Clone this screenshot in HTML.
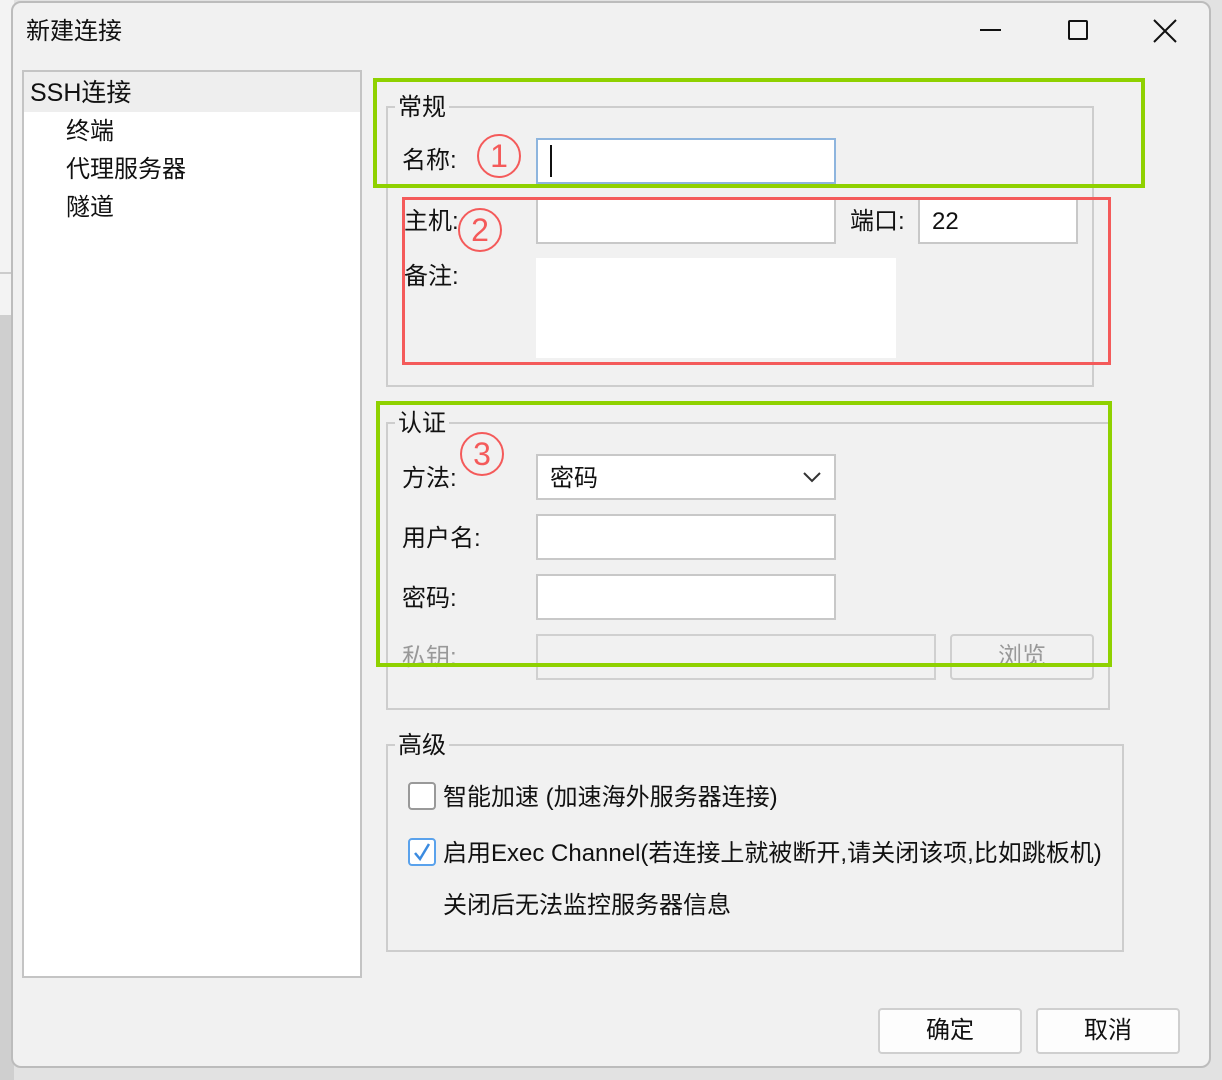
<!DOCTYPE html>
<html><head><meta charset="utf-8"><style>
*{margin:0;padding:0;box-sizing:border-box}
body{width:1222px;height:1080px;background:#e2e2e2;position:relative;overflow:hidden;font-family:"Liberation Sans","Noto Sans CJK SC",sans-serif;color:#111}
.a{position:absolute}
.t{position:absolute;font-size:24px;line-height:28px;white-space:nowrap}
.box{position:absolute;background:#fff;border:2px solid #c8c8c8}
.grp{position:absolute;border:2px solid #cdcdcd}
.lg{position:absolute;background:#f1f1f1;padding:0 3px;font-size:24px;line-height:28px}
.btn{position:absolute;background:#fdfdfd;border:2px solid #cfcfcf;border-radius:4px;font-size:24px;text-align:center;line-height:42px}
.circ{position:absolute;width:44px;height:44px;border:2px solid #f45a5a;border-radius:50%;color:#f45a5a;font-size:32px;line-height:40px;text-align:center}
</style></head><body>
<div class="a" style="left:0;top:0;width:14px;height:315px;background:#f3f3f3"></div>
<div class="a" style="left:0;top:272px;width:14px;height:2px;background:#ccc"></div>
<div class="a" style="left:0;top:315px;width:14px;height:765px;background:#cfcfcf"></div>
<div class="a" style="left:11px;top:1px;width:1200px;height:1067px;background:#f1f1f1;border:2px solid #bcbcbc;border-radius:10px"></div>
<div class="t" style="left:26px;top:18px">新建连接</div>
<div class="a" style="left:980px;top:29px;width:21px;height:2px;background:#111"></div>
<div class="a" style="left:1068px;top:20px;width:20px;height:20px;border:2px solid #111;border-radius:2px"></div>
<svg class="a" style="left:1152px;top:18px" width="26" height="26"><path d="M2 2L24 24M24 2L2 24" stroke="#111" stroke-width="2"/></svg>
<div class="a" style="left:22px;top:70px;width:340px;height:908px;background:#fff;border:2px solid #c4c4c4"></div>
<div class="a" style="left:24px;top:72px;width:336px;height:40px;background:#eeeeee"></div>
<div class="t" style="left:30px;top:79px;font-size:25px">SSH连接</div>
<div class="t" style="left:66px;top:118px">终端</div>
<div class="t" style="left:66px;top:156px">代理服务器</div>
<div class="t" style="left:66px;top:194px">隧道</div>
<div class="grp" style="left:386px;top:106px;width:708px;height:281px"></div>
<div class="lg" style="left:395px;top:94px">常规</div>
<div class="t" style="left:402px;top:147px">名称:</div>
<div class="box" style="left:536px;top:138px;width:300px;height:46px;border-color:#8eb5de"></div>
<div class="a" style="left:550px;top:145px;width:2px;height:32px;background:#111"></div>
<div class="t" style="left:404px;top:208px">主机:</div>
<div class="box" style="left:536px;top:198px;width:300px;height:46px"></div>
<div class="t" style="left:850px;top:208px">端口:</div>
<div class="box" style="left:918px;top:198px;width:160px;height:46px"></div>
<div class="t" style="left:932px;top:208px">22</div>
<div class="t" style="left:404px;top:263px">备注:</div>
<div class="a" style="left:536px;top:258px;width:360px;height:100px;background:#fff"></div>
<div class="grp" style="left:386px;top:422px;width:724px;height:288px"></div>
<div class="lg" style="left:395px;top:410px">认证</div>
<div class="t" style="left:402px;top:465px">方法:</div>
<div class="box" style="left:536px;top:454px;width:300px;height:46px"></div>
<div class="t" style="left:550px;top:465px">密码</div>
<svg class="a" style="left:802px;top:470px" width="20" height="14"><path d="M2 3L10 11L18 3" stroke="#333" stroke-width="2" fill="none"/></svg>
<div class="t" style="left:402px;top:525px">用户名:</div>
<div class="box" style="left:536px;top:514px;width:300px;height:46px"></div>
<div class="t" style="left:402px;top:585px">密码:</div>
<div class="box" style="left:536px;top:574px;width:300px;height:46px"></div>
<div class="t" style="left:402px;top:644px;color:#999">私钥:</div>
<div class="a" style="left:536px;top:634px;width:400px;height:46px;border:2px solid #d0d0d0;background:#f1f1f1"></div>
<div class="btn" style="left:950px;top:634px;width:144px;height:46px;background:#f1f1f1;color:#999">浏览</div>
<div class="grp" style="left:386px;top:744px;width:738px;height:208px"></div>
<div class="lg" style="left:395px;top:732px">高级</div>
<div class="a" style="left:408px;top:782px;width:28px;height:28px;border:2px solid #999;border-radius:4px;background:#fff"></div>
<div class="t" style="left:443px;top:784px">智能加速 (加速海外服务器连接)</div>
<div class="a" style="left:408px;top:838px;width:28px;height:28px;border:2px solid #5aa2ec;border-radius:4px;background:#fff"></div>
<svg class="a" style="left:412px;top:842px" width="20" height="20"><path d="M3 11L8 17L17 2" stroke="#3b8be0" stroke-width="2.5" fill="none"/></svg>
<div class="t" style="left:443px;top:840px">启用Exec Channel(若连接上就被断开,请关闭该项,比如跳板机)</div>
<div class="t" style="left:443px;top:892px">关闭后无法监控服务器信息</div>
<div class="btn" style="left:878px;top:1008px;width:144px;height:46px">确定</div>
<div class="btn" style="left:1036px;top:1008px;width:144px;height:46px">取消</div>
<div class="a" style="left:373px;top:78px;width:772px;height:110px;border:4px solid #8fd100"></div>
<div class="a" style="left:402px;top:197px;width:709px;height:168px;border:3px solid #f45a5a"></div>
<div class="a" style="left:376px;top:401px;width:736px;height:266px;border:4px solid #8fd100"></div>
<div class="circ" style="left:477px;top:134px">1</div>
<div class="circ" style="left:458px;top:208px">2</div>
<div class="circ" style="left:460px;top:432px">3</div>
</body></html>
